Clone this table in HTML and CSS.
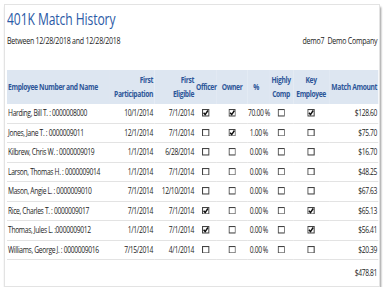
FILE: index.html
```html
<!DOCTYPE html>
<html>
<head>
<meta charset="utf-8">
<link rel="stylesheet" href="styles.css">
</head>
<body>
<div class="card">
  <div class="sheet">
    <h1 class="title">401K Match History</h1>
    <div class="subrow">
      <div class="sub">Between 12/28/2018 and 12/28/2018</div>
      <div class="company">demo7&nbsp; Demo Company</div>
    </div>
    <table class="grid">
      <colgroup>
        <col class="w-name"><col class="w-part"><col class="w-elig"><col class="w-off"><col class="w-own"><col class="w-pct"><col class="w-hc"><col class="w-key"><col class="w-amt">
      </colgroup>
      <thead>
        <tr>
          <th class="l">Employee Number and Name</th>
          <th class="r">First<br>Participation</th>
          <th class="r">First<br>Eligible</th>
          <th class="c">Officer</th>
          <th class="c">Owner</th>
          <th class="r pcth">%</th>
          <th class="c">Highly<br>Comp</th>
          <th class="c">Key<br>Employee</th>
          <th class="r">Match Amount</th>
        </tr>
      </thead>
      <tbody>
        <tr><td class="l">Harding, Bill T. : 0000008000</td><td class="r">10/1/2014</td><td class="r">7/1/2014</td><td class="c"><svg class="cb" viewBox="0 0 7 7" preserveAspectRatio="none"><rect x="0.5" y="0.5" width="6" height="6"/><path d="M1.5 3.5 L3 5.2 L5.6 1.4"/></svg></td><td class="c"><svg class="cb" viewBox="0 0 7 7" preserveAspectRatio="none"><rect x="0.5" y="0.5" width="6" height="6"/><path d="M1.5 3.5 L3 5.2 L5.6 1.4"/></svg></td><td class="r">70.00<span class="pc">%</span></td><td class="c"><svg class="cb" viewBox="0 0 7 7" preserveAspectRatio="none"><rect x="0.5" y="0.5" width="6" height="6"/></svg></td><td class="c"><svg class="cb" viewBox="0 0 7 7" preserveAspectRatio="none"><rect x="0.5" y="0.5" width="6" height="6"/><path d="M1.5 3.5 L3 5.2 L5.6 1.4"/></svg></td><td class="r">$128.60</td></tr>
        <tr><td class="l">Jones, Jane T. : 0000009011</td><td class="r">12/1/2014</td><td class="r">7/1/2014</td><td class="c"><svg class="cb" viewBox="0 0 7 7" preserveAspectRatio="none"><rect x="0.5" y="0.5" width="6" height="6"/></svg></td><td class="c"><svg class="cb" viewBox="0 0 7 7" preserveAspectRatio="none"><rect x="0.5" y="0.5" width="6" height="6"/><path d="M1.5 3.5 L3 5.2 L5.6 1.4"/></svg></td><td class="r">1.00<span class="pc">%</span></td><td class="c"><svg class="cb" viewBox="0 0 7 7" preserveAspectRatio="none"><rect x="0.5" y="0.5" width="6" height="6"/></svg></td><td class="c"><svg class="cb" viewBox="0 0 7 7" preserveAspectRatio="none"><rect x="0.5" y="0.5" width="6" height="6"/></svg></td><td class="r">$75.70</td></tr>
        <tr><td class="l">Kilbrew, Chris W. : 0000009019</td><td class="r">1/1/2014</td><td class="r">6/28/2014</td><td class="c"><svg class="cb" viewBox="0 0 7 7" preserveAspectRatio="none"><rect x="0.5" y="0.5" width="6" height="6"/></svg></td><td class="c"><svg class="cb" viewBox="0 0 7 7" preserveAspectRatio="none"><rect x="0.5" y="0.5" width="6" height="6"/></svg></td><td class="r">0.00<span class="pc">%</span></td><td class="c"><svg class="cb" viewBox="0 0 7 7" preserveAspectRatio="none"><rect x="0.5" y="0.5" width="6" height="6"/></svg></td><td class="c"><svg class="cb" viewBox="0 0 7 7" preserveAspectRatio="none"><rect x="0.5" y="0.5" width="6" height="6"/></svg></td><td class="r">$16.70</td></tr>
        <tr><td class="l">Larson, Thomas H. : 0000009014</td><td class="r">1/1/2014</td><td class="r">7/1/2014</td><td class="c"><svg class="cb" viewBox="0 0 7 7" preserveAspectRatio="none"><rect x="0.5" y="0.5" width="6" height="6"/></svg></td><td class="c"><svg class="cb" viewBox="0 0 7 7" preserveAspectRatio="none"><rect x="0.5" y="0.5" width="6" height="6"/></svg></td><td class="r">0.00<span class="pc">%</span></td><td class="c"><svg class="cb" viewBox="0 0 7 7" preserveAspectRatio="none"><rect x="0.5" y="0.5" width="6" height="6"/></svg></td><td class="c"><svg class="cb" viewBox="0 0 7 7" preserveAspectRatio="none"><rect x="0.5" y="0.5" width="6" height="6"/></svg></td><td class="r">$48.25</td></tr>
        <tr><td class="l">Mason, Angie L. : 0000009010</td><td class="r">7/1/2014</td><td class="r">12/10/2014</td><td class="c"><svg class="cb" viewBox="0 0 7 7" preserveAspectRatio="none"><rect x="0.5" y="0.5" width="6" height="6"/></svg></td><td class="c"><svg class="cb" viewBox="0 0 7 7" preserveAspectRatio="none"><rect x="0.5" y="0.5" width="6" height="6"/></svg></td><td class="r">0.00<span class="pc">%</span></td><td class="c"><svg class="cb" viewBox="0 0 7 7" preserveAspectRatio="none"><rect x="0.5" y="0.5" width="6" height="6"/></svg></td><td class="c"><svg class="cb" viewBox="0 0 7 7" preserveAspectRatio="none"><rect x="0.5" y="0.5" width="6" height="6"/></svg></td><td class="r">$67.63</td></tr>
        <tr><td class="l">Rice, Charles T. : 0000009017</td><td class="r">7/1/2014</td><td class="r">7/1/2014</td><td class="c"><svg class="cb" viewBox="0 0 7 7" preserveAspectRatio="none"><rect x="0.5" y="0.5" width="6" height="6"/><path d="M1.5 3.5 L3 5.2 L5.6 1.4"/></svg></td><td class="c"><svg class="cb" viewBox="0 0 7 7" preserveAspectRatio="none"><rect x="0.5" y="0.5" width="6" height="6"/></svg></td><td class="r">0.00<span class="pc">%</span></td><td class="c"><svg class="cb" viewBox="0 0 7 7" preserveAspectRatio="none"><rect x="0.5" y="0.5" width="6" height="6"/></svg></td><td class="c"><svg class="cb" viewBox="0 0 7 7" preserveAspectRatio="none"><rect x="0.5" y="0.5" width="6" height="6"/><path d="M1.5 3.5 L3 5.2 L5.6 1.4"/></svg></td><td class="r">$65.13</td></tr>
        <tr><td class="l">Thomas, Jules L. :0000009012</td><td class="r">1/1/2014</td><td class="r">7/1/2014</td><td class="c"><svg class="cb" viewBox="0 0 7 7" preserveAspectRatio="none"><rect x="0.5" y="0.5" width="6" height="6"/><path d="M1.5 3.5 L3 5.2 L5.6 1.4"/></svg></td><td class="c"><svg class="cb" viewBox="0 0 7 7" preserveAspectRatio="none"><rect x="0.5" y="0.5" width="6" height="6"/></svg></td><td class="r">0.00<span class="pc">%</span></td><td class="c"><svg class="cb" viewBox="0 0 7 7" preserveAspectRatio="none"><rect x="0.5" y="0.5" width="6" height="6"/></svg></td><td class="c"><svg class="cb" viewBox="0 0 7 7" preserveAspectRatio="none"><rect x="0.5" y="0.5" width="6" height="6"/><path d="M1.5 3.5 L3 5.2 L5.6 1.4"/></svg></td><td class="r">$56.41</td></tr>
        <tr><td class="l">Williams, George J. : 0000009016</td><td class="r">7/15/2014</td><td class="r">4/1/2014</td><td class="c"><svg class="cb" viewBox="0 0 7 7" preserveAspectRatio="none"><rect x="0.5" y="0.5" width="6" height="6"/></svg></td><td class="c"><svg class="cb" viewBox="0 0 7 7" preserveAspectRatio="none"><rect x="0.5" y="0.5" width="6" height="6"/></svg></td><td class="r">0.00<span class="pc">%</span></td><td class="c"><svg class="cb" viewBox="0 0 7 7" preserveAspectRatio="none"><rect x="0.5" y="0.5" width="6" height="6"/></svg></td><td class="c"><svg class="cb" viewBox="0 0 7 7" preserveAspectRatio="none"><rect x="0.5" y="0.5" width="6" height="6"/></svg></td><td class="r">$20.39</td></tr>
      </tbody>
      <tfoot>
        <tr><td colspan="8"></td><td class="r total">$478.81</td></tr>
      </tfoot>
    </table>
  </div>
</div>
</body>
</html>
```
FILE: styles.css
```css
html, body {
  margin: 0;
  padding: 0;
  background: #ffffff;
}
body {
  font-family: "Open Sans", "Liberation Sans", sans-serif;
  color: #333333;
}
.card {
  margin: 4px 0 0 4px;
  width: 376px;
  height: 283px;
  border: 1px solid #e3e3e3;
  box-shadow: 1px 3px 2px rgba(0, 0, 0, 0.4);
  padding: 4px 1px 0 2px;
  box-sizing: border-box;
  background: #fff;
  overflow: hidden;
}
.sheet {
  width: 475.8px;
  transform: scaleX(0.78);
  transform-origin: 0 0;
}
.title {
  margin: 0;
  font-weight: 400;
  font-size: 15.5px;
  line-height: 20px;
  letter-spacing: -0.1px;
  color: #2b5aa6;
}
.subrow {
  display: flex;
  justify-content: space-between;
  align-items: center;
  margin-top: 6px;
  height: 11px;
  padding-right: 1px;
}
.sub, .company {
  font-size: 9px;
  line-height: 11px;
  letter-spacing: -0.3px;
  color: #1a1a1a;
}
.grid {
  margin-top: 24px;
  width: 475.8px;
  table-layout: fixed;
  border-collapse: separate;
  border-spacing: 0;
  font-size: 8.6px;
  letter-spacing: -0.42px;
}
.w-name { width: 132.1px; }
.w-part { width: 56.4px; }
.w-elig { width: 52.6px; }
.w-off { width: 28.2px; }
.w-own { width: 38.5px; }
.w-pct { width: 28.2px; }
.w-hc { width: 30.8px; }
.w-key { width: 46.2px; }
.w-amt { width: 62.8px; }
.grid th {
  background: #dde6f1;
  color: #2d5699;
  font-weight: 700;
  font-size: 8.6px;
  letter-spacing: -0.45px;
  line-height: 14px;
  height: 34px;
  box-sizing: border-box;
  padding: 3px 1.3px;
  vertical-align: middle;
  white-space: nowrap;
  overflow: visible;
}
.grid td {
  line-height: 18.5px;
  padding: 0 1.3px;
  border-bottom: 1px solid #e3e3e3;
  white-space: nowrap;
  color: #1c1c1c;
  vertical-align: middle;
}
.grid tfoot td {
  border-bottom: none;
  line-height: 26px;
}
.l { text-align: left; }
.r { text-align: right; }
.c { text-align: center; }
.pc { margin-left: 1.5px; }
.pcth { padding-right: 13px !important; }
.cb {
  display: inline-block;
  width: 9.5px;
  height: 7.5px;
  vertical-align: middle;
  margin-top: -1px;
}
.cb rect {
  fill: #fff;
  stroke: #444;
  stroke-width: 1;
}
.cb path {
  fill: none;
  stroke: #111;
  stroke-width: 1.4;
}
```
